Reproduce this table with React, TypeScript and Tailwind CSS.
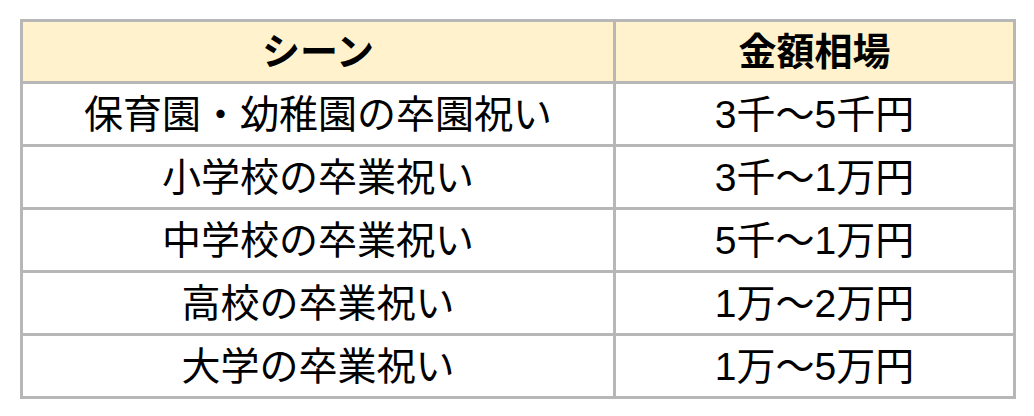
export default function App() {
  const rows: [string, string][] = [
    ["保育園・幼稚園の卒園祝い", "3千～5千円"],
    ["小学校の卒業祝い", "3千～1万円"],
    ["中学校の卒業祝い", "5千～1万円"],
    ["高校の卒業祝い", "1万～2万円"],
    ["大学の卒業祝い", "1万～5万円"],
  ];
  return (
    <div
      className="w-[1034px] h-[416px] bg-white pt-[19px] pl-[20px]"
      style={{ fontFamily: '"Liberation Sans", "Noto Sans CJK JP", sans-serif' }}
    >
      <table className="border-collapse w-[996px] border-[3px] border-[#b7b7b7] text-black">
        <thead>
          <tr className="h-[62px] bg-[#fff2cc]">
            <th className="w-[593px] border-[3px] border-[#b7b7b7] text-[38px] font-bold text-center p-0 leading-none">
              シーン
            </th>
            <th className="border-[3px] border-[#b7b7b7] text-[38px] font-bold text-center p-0 leading-none">
              金額相場
            </th>
          </tr>
        </thead>
        <tbody>
          {rows.map(([a, b]) => (
            <tr key={a} className="h-[63px]">
              <td className="border-[3px] border-[#b7b7b7] text-[39px] text-center p-0 leading-none">
                {a}
              </td>
              <td className="border-[3px] border-[#b7b7b7] text-[39px] text-center p-0 leading-none">
                {b}
              </td>
            </tr>
          ))}
        </tbody>
      </table>
    </div>
  );
}
